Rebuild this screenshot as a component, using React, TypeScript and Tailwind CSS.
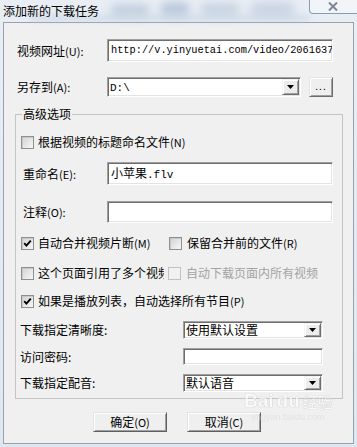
import type { ReactNode } from "react";

const Sunken = ({ className, children }: { className: string; children?: ReactNode }) => (
    <div className={"flex items-center bg-white border border-t-[#a0a0a0] border-l-[#a0a0a0] border-b-white border-r-white shadow-[inset_1px_1px_0_#6d6d6d,inset_-1px_-1px_0_#e3e3e3] " + className}>
        {children}
    </div>
);

const Arrow = () => (
    <div className="h-full w-[17px] mr-[1px] flex items-center justify-center bg-[#ececec] border border-t-[#f4f4f4] border-l-[#f4f4f4] border-b-[#6d6d6d] border-r-[#6d6d6d] shadow-[inset_1px_1px_0_#fff,inset_-1px_-1px_0_#a0a0a0]">
        <svg width="7" height="4" viewBox="0 0 7 4"><polygon points="0,0 7,0 3.5,4" fill="#000" /></svg>
    </div>
);

const Combo = ({ className, children }: { className: string; children: ReactNode }) => (
    <Sunken className={"py-[1px] " + className}>
        <div className="flex-1 pl-[2px] leading-[14px] whitespace-nowrap">{children}</div>
        <Arrow />
    </Sunken>
);

const Check = ({ checked = false, disabled = false }: { checked?: boolean; disabled?: boolean }) => (
    <div className={disabled
        ? "w-[13px] h-[13px] shrink-0 border border-[#c2c2c2] bg-[#f1f1f1]"
        : "w-[13px] h-[13px] shrink-0 border border-[#8e8f8f] bg-[linear-gradient(135deg,#d2d2d2,#f7f7f7)] shadow-[inset_1px_1px_0_#c9c9c9]"}>
        {checked && (
            <svg width="11" height="11" viewBox="0 0 11 11">
                <path d="M2.2 5.2 L4.4 7.6 L8.8 2.6" fill="none" stroke="#000" strokeWidth="1.9" />
            </svg>
        )}
    </div>
);

const Button = ({ children }: { children: ReactNode }) => (
    <div className="w-[74px] h-[20px] flex items-center justify-center bg-[#efefef] border border-t-[#e3e3e3] border-l-[#e3e3e3] border-b-[#5f5f5f] border-r-[#5f5f5f] shadow-[inset_1px_1px_0_#fff,inset_-1px_-1px_0_#a0a0a0] leading-[14px]">
        {children}
    </div>
);

// half-width latin bits, as the dialog's bitmap font draws them
const Key = ({ children }: { children: ReactNode }) => (
    <span className="text-[11px]">{children}</span>
);

const App = () => {
    return (
        <div className="relative w-[357px] h-[447px] overflow-hidden bg-[linear-gradient(180deg,#e9eef5,#dfe7f1)] font-['Noto_Sans_CJK_SC',sans-serif] text-black">
            {/* title bar */}
            <div className="relative h-[22px] flex items-start justify-between">
                <div className="absolute left-[110px] top-[4px] w-[40px] h-[12px] rounded-full bg-[#9fb3cc] opacity-50 blur-[4px]" />
                <div className="absolute left-[160px] top-[2px] w-[30px] h-[14px] rounded-full bg-[#8ea6c4] opacity-50 blur-[4px]" />
                <div className="absolute left-[200px] top-[3px] w-[40px] h-[12px] rounded-full bg-[#a8bad0] opacity-50 blur-[4px]" />
                <div className="absolute left-[250px] top-[2px] w-[45px] h-[14px] rounded-full bg-[#9fb1c9] opacity-40 blur-[4px]" />
                <div className="absolute left-[30px] top-[15px] w-[280px] h-[6px] rounded-full bg-[#b9c8da] opacity-50 blur-[3px]" />
                <span className="relative pl-[3px] pt-[3px] text-[12px] leading-[16px]">添加新的下载任务</span>
                <div className="relative mr-[-6px] w-[54px] h-[14px] rounded-b-[4px] border border-t-0 border-[#8d9bb0] bg-[#f3f6fa]/70 flex items-center justify-center">
                    <svg width="10" height="9" viewBox="0 0 10 9" className="-ml-[6px]">
                        <path d="M1 0.5 L9 8.5 M9 0.5 L1 8.5" stroke="#7c8595" strokeWidth="2" />
                    </svg>
                </div>
            </div>

            {/* client area */}
            <div className="ml-[3px] w-[351px] h-[422px] border border-[#98a1ac] bg-[#f0f0f0] text-[12px]">
                <div className="mt-[16px] h-[23px] flex items-center pl-[13px]">
                    <span className="w-[90px]">视频网址<Key>(U):</Key></span>
                    <Sunken className="w-[226px] h-[23px] pl-[3px] overflow-hidden">
                        <span className="font-mono text-[10.3px] whitespace-nowrap">http://v.yinyuetai.com/video/2061637</span>
                    </Sunken>
                </div>
                <div className="mt-[15px] h-[20px] flex items-center pl-[13px]">
                    <span className="w-[90px]">另存到<Key>(A):</Key></span>
                    <Combo className="w-[194px] h-[20px]"><span className="font-mono text-[11px]">D:\</span></Combo>
                    <div className="ml-[8px] w-[24px] h-[20px] flex items-center justify-center bg-[#efefef] border border-t-[#e3e3e3] border-l-[#e3e3e3] border-b-[#6d6d6d] border-r-[#6d6d6d] shadow-[inset_1px_1px_0_#fff,inset_-1px_-1px_0_#a0a0a0] text-[10px] leading-[10px] tracking-[1px] pb-[2px]">...</div>
                </div>

                {/* group box */}
                <div className="relative mt-[17px] ml-[11px] w-[328px] border border-[#c4c4c4] pb-[6px]">
                    <span className="absolute -top-[9px] left-[6px] px-[1px] bg-[#f0f0f0] leading-[16px]">高级选项</span>

                    <div className="mt-[17px] h-[20px] flex items-center pl-[5px] gap-[4px]">
                        <Check />
                        <span>根据视频的标题命名文件<Key>(N)</Key></span>
                    </div>
                    <div className="mt-[10px] h-[23px] flex items-center pl-[7px]">
                        <span className="w-[84px]">重命名<Key>(E):</Key></span>
                        <Sunken className="w-[226px] h-[23px] pl-[3px]">
                            <span>小苹果<span className="font-mono text-[11px]">.flv</span></span>
                        </Sunken>
                    </div>
                    <div className="mt-[16px] h-[22px] flex items-center pl-[7px]">
                        <span className="w-[84px]">注释<Key>(O):</Key></span>
                        <Sunken className="w-[226px] h-[22px]" />
                    </div>
                    <div className="mt-[10px] h-[20px] flex items-center pl-[5px]">
                        <div className="w-[148px] flex items-center gap-[4px]">
                            <Check checked />
                            <span className="whitespace-nowrap">自动合并视频片断<Key>(M)</Key></span>
                        </div>
                        <div className="flex items-center gap-[5px]">
                            <Check />
                            <span>保留合并前的文件<Key>(R)</Key></span>
                        </div>
                    </div>
                    <div className="mt-[10px] h-[20px] flex items-center pl-[5px]">
                        <div className="w-[147px] flex items-center gap-[4px]">
                            <Check />
                            <span className="w-[126px] overflow-hidden whitespace-nowrap">这个页面引用了多个视频</span>
                        </div>
                        <div className="flex items-center gap-[5px]">
                            <Check disabled />
                            <span className="text-[#a3a3a3]">自动下载页面内所有视频</span>
                        </div>
                    </div>
                    <div className="mt-[8px] h-[20px] flex items-center pl-[5px] gap-[4px]">
                        <Check checked />
                        <span>如果是播放列表，自动选择所有节目<Key>(P)</Key></span>
                    </div>
                    <div className="mt-[10px] h-[18px] flex items-center pl-[4px]">
                        <span className="w-[163px]">下载指定清晰度:</span>
                        <Combo className="w-[140px] h-[18px]">使用默认设置</Combo>
                    </div>
                    <div className="mt-[9px] h-[17px] flex items-center pl-[4px]">
                        <span className="w-[163px]">访问密码:</span>
                        <Sunken className="w-[140px] h-[17px]" />
                    </div>
                    <div className="mt-[9px] h-[18px] flex items-center pl-[4px]">
                        <span className="w-[163px]">下载指定配音:</span>
                        <Combo className="w-[140px] h-[18px]">默认语音</Combo>
                    </div>
                </div>

                <div className="mt-[13px] flex pl-[89px] gap-[20px]">
                    <Button>确定<Key>(O)</Key></Button>
                    <Button>取消<Key>(C)</Key></Button>
                </div>
            </div>

            {/* watermark */}
            <div className="absolute left-[244px] top-[390px] flex flex-col items-start opacity-60 pointer-events-none">
                <div className="flex items-end gap-[3px] text-white [text-shadow:0_0_1px_#a8a8a8,0_0_1px_#a8a8a8]">
                    <span className="font-['Liberation_Sans',sans-serif] font-bold text-[19px] leading-[22px]">Bai</span>
                    <span className="font-['Liberation_Sans',sans-serif] font-bold text-[19px] leading-[22px]">du</span>
                    <span className="text-[15px] leading-[20px]">经验</span>
                </div>
                <span className="font-['Liberation_Sans',sans-serif] text-[9px] leading-[10px] text-[#dadada] ml-[8px]">jingyan.baidu.com</span>
            </div>
        </div>
    );
};

export default App;
